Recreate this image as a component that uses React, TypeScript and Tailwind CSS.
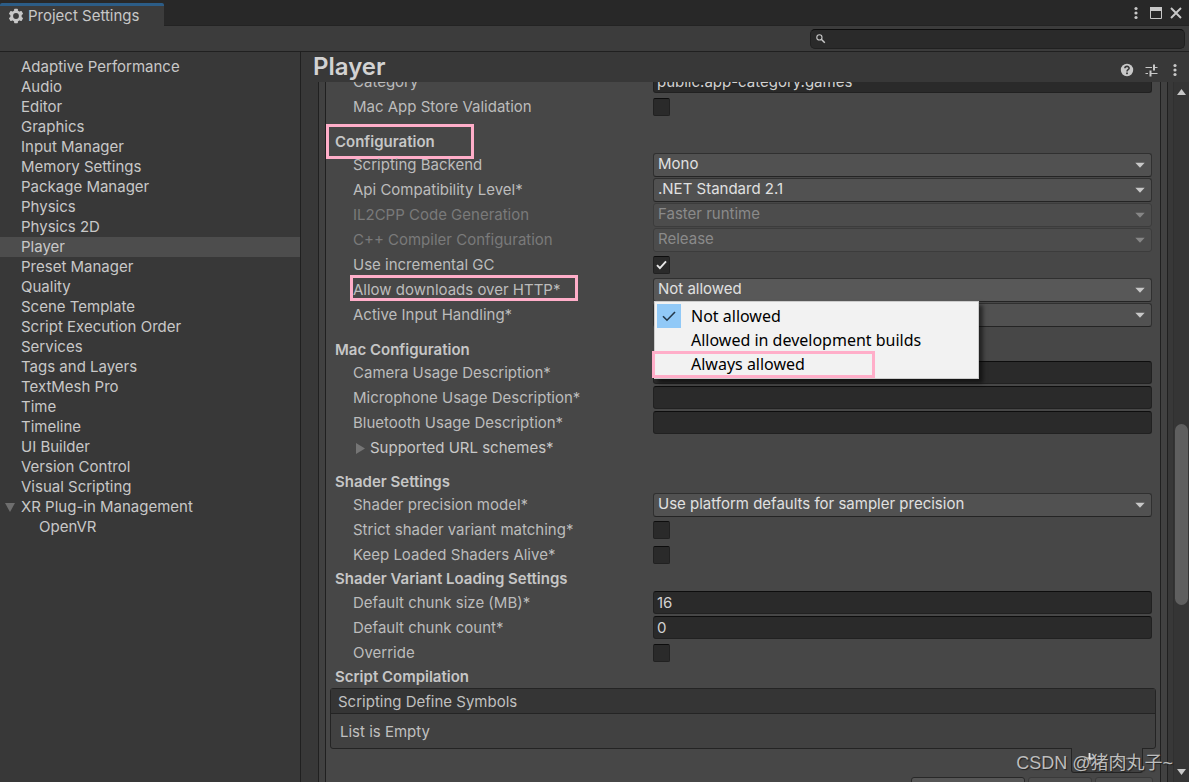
import React, { useId } from "react";

const TREE = [
  "Adaptive Performance",
  "Audio",
  "Editor",
  "Graphics",
  "Input Manager",
  "Memory Settings",
  "Package Manager",
  "Physics",
  "Physics 2D",
  "Player",
  "Preset Manager",
  "Quality",
  "Scene Template",
  "Script Execution Order",
  "Services",
  "Tags and Layers",
  "TextMesh Pro",
  "Time",
  "Timeline",
  "UI Builder",
  "Version Control",
  "Visual Scripting",
];

function GearIcon() {
  return (
    <svg width="16" height="16" viewBox="-8 -8 16 16" aria-hidden="true">
      <circle r="4.3" fill="none" stroke="#c8c8c8" strokeWidth="2.8" />
      {[0, 60, 120, 180, 240, 300].map((a) => (
        <rect key={a} x="-1.9" y="-7.3" width="3.8" height="3" rx="0.7" fill="#c8c8c8" transform={`rotate(${a})`} />
      ))}
    </svg>
  );
}

function DotsIcon() {
  return (
    <svg width="4" height="14" viewBox="0 0 4 14" fill="#c8c8c8" aria-hidden="true">
      <circle cx="2" cy="2.5" r="1.6" />
      <circle cx="2" cy="7" r="1.6" />
      <circle cx="2" cy="11.5" r="1.6" />
    </svg>
  );
}

function SlidersIcon() {
  return (
    <svg width="13" height="13" viewBox="0 0 13 13" fill="none" stroke="#c8c8c8" aria-hidden="true">
      <path d="M0.5 3.5H7M9 3.5H12.5M0.5 9.5H3M6 9.5H12.5" strokeWidth="1.2" />
      <path d="M9 0.5V6.5M5.5 6.5V12.5" strokeWidth="2" />
    </svg>
  );
}

function HelpIcon() {
  return (
    <svg width="14" height="14" viewBox="0 0 14 14" aria-hidden="true">
      <circle cx="7" cy="7" r="6.2" fill="#c8c8c8" />
      <path d="M4.9 5.3C4.9 2.7 9.1 2.7 9.1 5.2C9.1 6.7 7 6.7 7 8.4" fill="none" stroke="#383838" strokeWidth="1.6" />
      <rect x="6.1" y="9.5" width="1.8" height="1.7" fill="#383838" />
    </svg>
  );
}

function Caret({ dim = false }: { dim?: boolean }) {
  return (
    <svg className="pointer-events-none col-start-1 row-start-1 mr-[7px] self-center justify-self-end" width="10" height="7" viewBox="0 0 10 7" aria-hidden="true">
      <path d="M0.3 0.8H9.7L5 5.8Z" fill={dim ? "#868686" : "#c8c8c8"} />
    </svg>
  );
}

function Row({ label, id, dim, marked, children }: { label: string; id: string; dim?: boolean; marked?: boolean; children: React.ReactNode }) {
  return (
    <div className="flex h-[25px] pl-[27px] pr-2">
      <div className="relative w-[300px] shrink-0">
        {marked && <span className="absolute -left-[3px] -top-[3px] h-[26px] w-[228px] border-[3px] border-[#ffaec9]" />}
        <label htmlFor={id} className={dim ? "leading-6 text-[#7a7a7a]" : "leading-6 text-[#bcbcbc]"}>
          {label}
        </label>
      </div>
      {children}
    </div>
  );
}

function SelectRow({ label, value, dim, open, marked, children }: { label: string; value: string; dim?: boolean; open?: boolean; marked?: boolean; children?: React.ReactNode }) {
  const id = useId();
  const tone = dim
    ? "border-[#3c3c3c] bg-[#4c4c4c] text-[#8a8a8a]"
    : open
      ? "border-[#303030] border-b-[#242424] bg-[#585858] text-[#e0e0e0]"
      : "border-[#303030] border-b-[#242424] bg-[#515151] text-[#e0e0e0]";
  return (
    <Row label={label} id={id} dim={dim} marked={marked}>
      <div className="relative grid h-[23px] min-w-0 flex-1">
        <select id={id} disabled={dim} defaultValue={value} className={`col-start-1 row-start-1 w-full appearance-none rounded-[3px] border pb-[2px] pl-1 pr-6 leading-5 opacity-100 ${tone}`}>
          <option>{value}</option>
        </select>
        <Caret dim={dim} />
        {children}
      </div>
    </Row>
  );
}

function TextRow({ label, value = "" }: { label: string; value?: string }) {
  const id = useId();
  return (
    <Row label={label} id={id}>
      <input id={id} type="text" defaultValue={value} className="h-[23px] min-w-0 flex-1 rounded-[3px] border border-[#212121] border-t-[#0d0d0d] bg-[#2a2a2a] px-[3px] text-[#d2d2d2]" />
    </Row>
  );
}

function CheckRow({ label, checked = false }: { label: string; checked?: boolean }) {
  const id = useId();
  return (
    <Row label={label} id={id}>
      <div className="grid h-[23px] items-center">
        <input id={id} type="checkbox" defaultChecked={checked} className="peer col-start-1 row-start-1 h-[18px] w-[17px] appearance-none rounded-[2px] border border-[#212121] border-t-[#0d0d0d] bg-[#2a2a2a]" />
        <svg className="pointer-events-none invisible col-start-1 row-start-1 justify-self-center peer-checked:visible" width="11" height="10" viewBox="0 0 11 10" fill="none" aria-hidden="true">
          <path d="M1 5.2L3.9 8.2L10 1.4" stroke="#e8e8e8" strokeWidth="1.9" />
        </svg>
      </div>
    </Row>
  );
}

function Heading({ children, spaced, marked }: { children: string; spaced?: boolean; marked?: boolean }) {
  return (
    <div className={spaced ? "relative mt-[10px] h-[23px] pl-[9px] leading-[23px]" : "relative h-[23px] pl-[9px] leading-[21px]"}>
      <h2 className="font-semibold text-[#c6c6c6]">{children}</h2>
      {marked && <span className="absolute -top-[6px] left-0 h-[35px] w-[148px] border-[3px] border-[#ffaec9]" />}
    </div>
  );
}

function DownloadsMenu() {
  return (
    <div role="listbox" aria-label="Allow downloads over HTTP" className="absolute left-px top-[23px] z-10 w-[325px] border border-[#cccccc] bg-[#f2f2f2] p-[2px] font-['Noto_Sans',sans-serif] text-base text-black shadow-[4px_4px_4px_rgba(0,0,0,0.5)]">
      {["Not allowed", "Allowed in development builds", "Always allowed"].map((t, i) => (
        <button key={t} type="button" role="option" aria-selected={i === 0} className="relative flex h-6 w-full items-center text-left">
          <span className={i === 0 ? "flex h-6 w-6 items-center justify-center bg-[#91c9f7]" : "h-6 w-6"}>
            {i === 0 && (
              <svg width="14" height="11" viewBox="0 0 14 11" fill="none" aria-hidden="true">
                <path d="M1 5.2L5 9.2L13 1" stroke="#24384a" strokeWidth="1.6" />
              </svg>
            )}
          </span>
          <span className="pl-[10px]">{t}</span>
          {i === 2 && <span className="absolute -left-[5px] -top-px h-[27px] w-[223px] border-[3px] border-[#ffaec9]" />}
        </button>
      ))}
    </div>
  );
}

export default function App() {
  return (
    <div className="relative flex h-screen flex-col overflow-hidden bg-[#383838] font-['Inter',sans-serif] text-[15px] text-[#c8c8c8]">
      <header className="flex h-[26px] shrink-0 items-end justify-between border-b border-[#232323] bg-[#282828]">
        <div className="-mb-px flex h-[23px] w-[164px] items-center gap-1 rounded-t-[2px] border-t-[3px] border-[#2c5d87] bg-[#3c3c3c] pl-2">
          <GearIcon />
          <h1 className="leading-5">Project Settings</h1>
        </div>
        <div className="flex h-full items-center gap-2 pr-[7px]">
          <button type="button" aria-label="More" className="mr-1">
            <DotsIcon />
          </button>
          <button type="button" aria-label="Maximize">
            <svg width="12" height="12" viewBox="0 0 12 12" aria-hidden="true">
              <path d="M0.5 0.5H11.5V11.5H0.5Z" fill="none" stroke="#c8c8c8" />
              <path d="M0 0H12V4H0Z" fill="#c8c8c8" />
            </svg>
          </button>
          <button type="button" aria-label="Close">
            <svg width="12" height="12" viewBox="0 0 12 12" aria-hidden="true">
              <path d="M1 1L11 11M11 1L1 11" stroke="#c8c8c8" strokeWidth="1.9" />
            </svg>
          </button>
        </div>
      </header>

      <div className="flex h-[26px] shrink-0 justify-end border-b border-[#202020] bg-[#3c3c3c] pr-1 pt-[3px]">
        <label className="flex h-5 w-[375px] items-center rounded-[5px] border border-[#202020] border-t-[#0d0d0d] bg-[#2a2a2a] pl-[5px]">
          <svg width="10" height="10" viewBox="0 0 10 10" fill="none" stroke="#c8c8c8" aria-label="Search">
            <circle cx="3.4" cy="3.4" r="2.6" strokeWidth="1.1" />
            <path d="M5.3 5.3L8.8 8.8" strokeWidth="1.5" />
          </svg>
          <input type="search" aria-label="Search settings" className="min-w-0 flex-1 bg-transparent px-1 outline-none" />
        </label>
      </div>

      <div className="flex min-h-0 flex-1">
        <nav className="w-[301px] shrink-0 border-r border-[#202020] pt-[5px]">
          <ul>
            {TREE.map((name) => (
              <li key={name}>
                <a href="#" className={name === "Player" ? "block h-5 bg-[#4d4d4d] pl-[21px] leading-5" : "block h-5 pl-[21px] leading-5"}>
                  {name}
                </a>
              </li>
            ))}
            <li>
              <a href="#" className="flex h-5 items-center gap-[6px] pl-[5px] leading-5">
                <svg width="10" height="9" viewBox="0 0 10 9" aria-hidden="true">
                  <path d="M0 0H10L5 9Z" fill="#6e6e6e" />
                </svg>
                XR Plug-in Management
              </a>
              <a href="#" className="block h-5 pl-[39px] leading-5">
                OpenVR
              </a>
            </li>
          </ul>
        </nav>

        <main className="flex min-w-0 flex-1 flex-col">
          <div className="flex h-[30px] shrink-0 items-center justify-between pl-3 pr-3">
            <h2 className="text-2xl font-semibold leading-8 text-[#d2d2d2]">Player</h2>
            <div className="flex items-center pt-[6px]">
              <button type="button" aria-label="Help" className="mr-[11px]">
                <HelpIcon />
              </button>
              <button type="button" aria-label="Presets" className="mr-[15px]">
                <SlidersIcon />
              </button>
              <button type="button" aria-label="Options">
                <DotsIcon />
              </button>
            </div>
          </div>

          <div className="flex min-h-0 flex-1">
            <div className="ml-[17px] min-w-0 flex-1 overflow-hidden border-x border-[#202020] bg-[#414141] px-[6px]">
              <div className="-mt-3 border-x border-[#202020] bg-[#474747]">
                <TextRow label="Category" value="public.app-category.games" />
                <CheckRow label="Mac App Store Validation" />

                <Heading spaced marked>
                  Configuration
                </Heading>
                <SelectRow label="Scripting Backend" value="Mono" />
                <SelectRow label="Api Compatibility Level*" value=".NET Standard 2.1" />
                <SelectRow label="IL2CPP Code Generation" value="Faster runtime" dim />
                <SelectRow label="C++ Compiler Configuration" value="Release" dim />
                <CheckRow label="Use incremental GC" checked />
                <SelectRow label="Allow downloads over HTTP*" value="Not allowed" open marked>
                  <DownloadsMenu />
                </SelectRow>
                <SelectRow label="Active Input Handling*" value="Input Manager (Old)" />

                <Heading spaced>Mac Configuration</Heading>
                <TextRow label="Camera Usage Description*" />
                <TextRow label="Microphone Usage Description*" />
                <TextRow label="Bluetooth Usage Description*" />
                <button type="button" className="flex h-6 items-center gap-[5px] pl-[30px]">
                  <svg width="9" height="11" viewBox="0 0 9 11" aria-hidden="true">
                    <path d="M0 0L9 5.5L0 11Z" fill="#757575" />
                  </svg>
                  Supported URL schemes*
                </button>

                <Heading spaced>Shader Settings</Heading>
                <SelectRow label="Shader precision model*" value="Use platform defaults for sampler precision" />
                <CheckRow label="Strict shader variant matching*" />
                <CheckRow label="Keep Loaded Shaders Alive*" />
                <Heading>Shader Variant Loading Settings</Heading>
                <TextRow label="Default chunk size (MB)*" value="16" />
                <TextRow label="Default chunk count*" value="0" />
                <CheckRow label="Override" />
                <Heading>Script Compilation</Heading>

                <section className="mx-1 -mt-px text-[#c0c0c0]">
                  <div className="rounded-[3px] border border-[#242424] bg-[#414141]">
                    <h3 className="h-[25px] border-b border-[#242424] bg-[#353535] pl-[7px] leading-[25px]">Scripting Define Symbols</h3>
                    <p className="h-[34px] pl-[9px] leading-9">List is Empty</p>
                  </div>
                  <div className="-mt-px mr-[13px] flex justify-end">
                    <div className="flex h-[25px] w-[72px] items-center justify-around rounded-b-[3px] border border-t-0 border-[#242424] bg-[#414141]">
                      <button type="button" aria-label="Add" className="pb-1">
                        <svg width="11" height="11" viewBox="0 0 11 11" aria-hidden="true">
                          <path d="M5.5 0V11M0 5.5H11" stroke="#e4e4e4" strokeWidth="1.8" />
                        </svg>
                      </button>
                      <button type="button" aria-label="Remove" className="pb-1">
                        <svg width="11" height="11" viewBox="0 0 11 11" aria-hidden="true">
                          <path d="M0 5.5H11" stroke="#808080" strokeWidth="1.6" />
                        </svg>
                      </button>
                    </div>
                  </div>
                </section>
                <div className="mt-1 flex justify-end gap-[3px] pr-[7px]">
                  <button type="button" aria-label="Copy Defines" className="h-6 w-[114px] rounded-[3px] border border-[#282828] bg-[#565656]" />
                  <button type="button" aria-label="Revert" className="h-6 w-16 rounded-[3px] border border-[#3a3a3a] bg-[#4e4e4e]" />
                  <button type="button" aria-label="Apply" className="h-6 w-[58px] rounded-[3px] border border-[#3a3a3a] bg-[#4e4e4e]" />
                </div>
              </div>
            </div>
            <div className="ml-[5px] flex w-4 shrink-0 flex-col items-center border-l border-[#303030] bg-[#353535]">
              <svg className="mt-[7px] shrink-0" width="9" height="6" viewBox="0 0 9 6" aria-hidden="true">
                <path d="M0 6H9L4.5 0Z" fill="#c8c8c8" />
              </svg>
              <div className="flex w-full flex-1 flex-col items-center py-1">
                <div className="grow-[325]" />
                <div className="w-[13px] grow-[181] rounded-full bg-[#5f5f5f]" />
                <div className="grow-[160]" />
              </div>
              <svg className="mb-[7px] shrink-0" width="9" height="6" viewBox="0 0 9 6" aria-hidden="true">
                <path d="M0 0H9L4.5 6Z" fill="#c8c8c8" />
              </svg>
            </div>
          </div>
        </main>
      </div>

      <p className="pointer-events-none absolute bottom-[5px] right-4 font-['Liberation_Sans','Noto_Sans_CJK_SC',sans-serif] text-lg leading-7 text-[#bdbdbd] [text-shadow:1px_1px_1px_#222]">
        CSDN @猪肉丸子~
      </p>
    </div>
  );
}
